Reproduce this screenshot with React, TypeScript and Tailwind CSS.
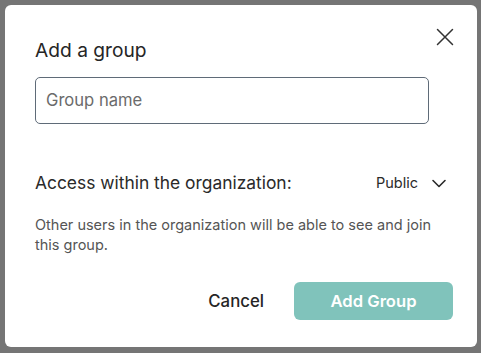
import React from "react";

export default function App() {
  return (
    <div className="w-[481px] h-[353px] bg-[#757575] p-[5px] pr-[4px] pb-[6px]" style={{ fontFamily: "Inter, 'Noto Sans', sans-serif" }}>
      <div className="relative h-full w-full bg-white rounded-[6px] pl-[30px] pr-[24px] pt-[33px]">
        <button className="absolute left-[426px] top-[18px] w-[28px] h-[28px] flex items-center justify-center text-[#333]">
          <svg width="18" height="18" viewBox="0 0 18 18" fill="none" stroke="currentColor" strokeWidth="1.5" strokeLinecap="round">
            <path d="M1.5 1.5L16.5 16.5M16.5 1.5L1.5 16.5" />
          </svg>
        </button>
        <h2 className="text-[19.2px] leading-[24px] font-normal text-[#262626]">Add a group</h2>
        <div className="mt-[15px] w-[394px] h-[47px] border border-[#5f6b78] rounded-[5px] px-[10px] flex items-center">
          <span className="text-[16.6px] text-[#6b6b6b]">Group name</span>
        </div>
        <div className="mt-[46px] flex items-center justify-between pr-[6px]">
          <span className="text-[17.4px] font-normal text-[#2a2a2a]">Access within the organization:</span>
          <div className="flex items-center gap-[13px]">
            <span className="text-[14.5px] font-normal text-[#2a2a2a]">Public</span>
            <svg width="16" height="16" viewBox="0 0 16 16" fill="none" stroke="#2a2a2a" strokeWidth="1.6" strokeLinecap="round" strokeLinejoin="round">
              <path d="M2 5.5L8 11.5L14 5.5" />
            </svg>
          </div>
        </div>
        <p className="mt-[19px] text-[14.5px] leading-[20px] text-[#555] w-[400px]">
          Other users in the organization will be able to see and join this group.
        </p>
        <div className="mt-[27px] flex items-center justify-end gap-[30px]">
          <button className="text-[16.8px] font-medium text-[#252525]">Cancel</button>
          <button className="w-[159px] h-[38px] rounded-[6px] bg-[#80c3bb] text-white text-[16.6px] font-semibold">Add Group</button>
        </div>
      </div>
    </div>
  );
}
